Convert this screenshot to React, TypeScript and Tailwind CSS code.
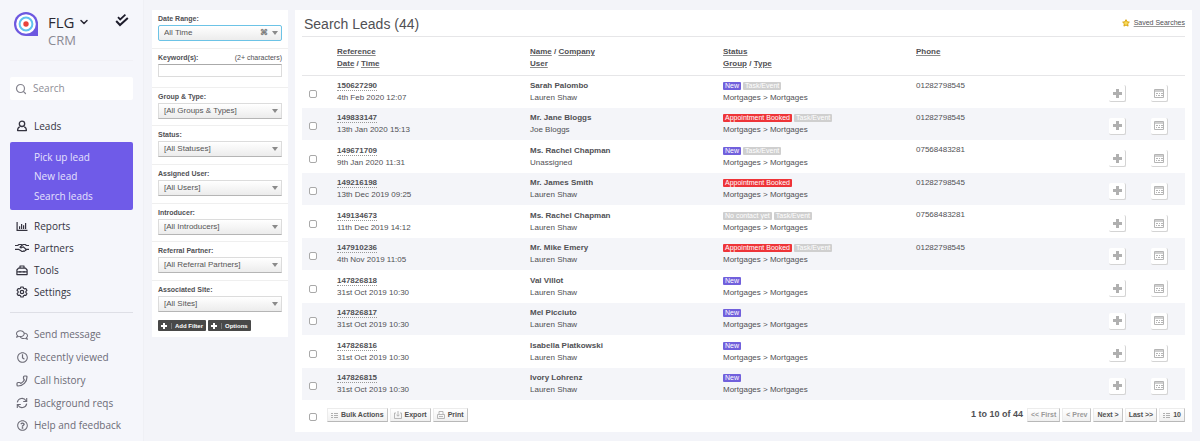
import type { ReactNode } from "react";
import { ChevronDown, Phone, Search } from "lucide-react";
import { FaRegClock, FaRegComments, FaRegQuestionCircle } from "react-icons/fa";

type Tag = "New" | "Task/Event" | "Appointment Booked" | "No contact yet";

interface Lead {
  reference: string;
  date: string;
  name: string;
  user: string;
  tags: Tag[];
  phone?: string;
}

const leads: Lead[] = [
  { reference: "150627290", date: "4th Feb 2020 12:07", name: "Sarah Palombo", user: "Lauren Shaw", tags: ["New", "Task/Event"], phone: "01282798545" },
  { reference: "149833147", date: "13th Jan 2020 15:13", name: "Mr. Jane Bloggs", user: "Joe Bloggs", tags: ["Appointment Booked", "Task/Event"], phone: "01282798545" },
  { reference: "149671709", date: "9th Jan 2020 11:31", name: "Ms. Rachel Chapman", user: "Unassigned", tags: ["New", "Task/Event"], phone: "07568483281" },
  { reference: "149216198", date: "13th Dec 2019 09:25", name: "Mr. James Smith", user: "Lauren Shaw", tags: ["Appointment Booked"], phone: "01282798545" },
  { reference: "149134673", date: "11th Dec 2019 14:12", name: "Ms. Rachel Chapman", user: "Lauren Shaw", tags: ["No contact yet", "Task/Event"], phone: "07568483281" },
  { reference: "147910236", date: "4th Nov 2019 11:05", name: "Mr. Mike Emery", user: "Lauren Shaw", tags: ["Appointment Booked", "Task/Event"], phone: "01282798545" },
  { reference: "147826818", date: "31st Oct 2019 10:30", name: "Val Villot", user: "Lauren Shaw", tags: ["New"] },
  { reference: "147826817", date: "31st Oct 2019 10:30", name: "Mel Picciuto", user: "Lauren Shaw", tags: ["New"] },
  { reference: "147826816", date: "31st Oct 2019 10:30", name: "Isabella Piatkowski", user: "Lauren Shaw", tags: ["New"] },
  { reference: "147826815", date: "31st Oct 2019 10:30", name: "Ivory Lohrenz", user: "Lauren Shaw", tags: ["New"] },
];

const tagColors: Record<Tag, string> = {
  New: "bg-[#7160dc]",
  "Task/Event": "bg-[#cfcfcf]",
  "Appointment Booked": "bg-[#ee3438]",
  "No contact yet": "bg-[#cfcfcf]",
};

const filters = [
  { id: "group", label: "Group & Type:", value: "[All Groups & Types]" },
  { id: "status", label: "Status:", value: "[All Statuses]" },
  { id: "assigned", label: "Assigned User:", value: "[All Users]" },
  { id: "introducer", label: "Introducer:", value: "[All Introducers]" },
  { id: "referral", label: "Referral Partner:", value: "[All Referral Partners]" },
  { id: "site", label: "Associated Site:", value: "[All Sites]" },
];

function Logo() {
  return (
    <svg viewBox="0 0 24 24" className="size-6 shrink-0">
      <path d="M12 0a12 12 0 1 0 0 24h12V12A12 12 0 0 0 12 0Z" fill="#6d58e0" />
      <circle cx="12" cy="12" r="9.8" fill="#fff" />
      <circle cx="12" cy="12" r="6.4" fill="none" stroke="#62c3ee" strokeWidth="2" />
      <circle cx="12" cy="12" r="2.7" fill="#e8443c" />
    </svg>
  );
}

function DoubleCheckIcon() {
  return (
    <svg viewBox="0 0 14 14" className="size-3.5" fill="none" stroke="#1d1c2b" strokeWidth="1.8">
      <path d="M3 4.200 5.200 6.400 10.400 1.700" />
      <path d="M1.200 8 5 12 12.800 5" strokeWidth="2" />
    </svg>
  );
}

function UserIcon() {
  return (
    <svg viewBox="0 0 12 12" className="size-3" fill="none" stroke="currentColor" strokeWidth="1.3">
      <circle cx="6" cy="3.8" r="2.7" />
      <path d="M3.8 6.9C2.2 7.300 1.600 8.500 1.600 10.600h8.800c0-2.100-.6-3.300-2.200-3.700" strokeLinejoin="round" />
    </svg>
  );
}

function ChartIcon() {
  return (
    <svg viewBox="0 0 12 12" className="size-3" fill="none" stroke="currentColor" strokeWidth="1.2">
      <path d="M1.100 2v8.400H11.500M3.600 6.200V9M5.600 4V9M7.600 5.300V9M9.600 3V9" />
    </svg>
  );
}

function HandshakeIcon() {
  return (
    <svg viewBox="0 0 14 12" className="h-3 w-3.5 shrink-0" fill="none" stroke="currentColor" strokeWidth="1.200" strokeLinejoin="round">
      <path d="M0 3.500h2.600L4 2.500h2.200l1 .7L8.300 2.500h1.900l1.300 1H14" />
      <path d="M7.200 3.200 5 5.200c.7 1 1.700.8 2.500 0l.9-.3 2.500 2.300c.6.800-.1 1.500-.8 1.200-.2.900-1.100 1.100-1.700.6-.6.700-1.500.6-2 .1L3.500 7.300H0M11.200 7.300H14" />
    </svg>
  );
}

function ToolboxIcon() {
  return (
    <svg viewBox="0 0 12 12" className="size-3" fill="none" stroke="currentColor" strokeWidth="1.2" strokeLinejoin="round">
      <path d="M.9 10.600V6l1.600-1.900h7L11.100 6v4.600Z" />
      <path d="M4 4V2h4v2M1 7.800h10M4 6.900v1.800M8 6.900v1.800" />
    </svg>
  );
}

function GearIcon() {
  return (
    <svg viewBox="0 0 12 12" className="size-3" fill="none" stroke="currentColor" strokeWidth="1.2" strokeLinejoin="round">
      <path d="M4.900 1h2.200l.4 1.300.9.500 1.400-.3 1.100 1.900-1 1v1.200l1 1-1.100 1.900-1.400-.3-.9.500-.4 1.300H4.900l-.4-1.300-.9-.5-1.400.3-1.100-1.900 1-1V5.400l-1-1 1.100-1.900 1.400.3.9-.5Z" />
      <circle cx="6" cy="6" r="1.700" />
    </svg>
  );
}

function SyncIcon() {
  return (
    <svg viewBox="0 0 12 12" className="size-3" fill="none" stroke="currentColor" strokeWidth="1.1">
      <path d="M1.300 5.300A4.700 4.700 0 0 1 10 3.700M10.700 1v3.500H7.200M10.700 6.700A4.700 4.700 0 0 1 2 8.300M1.300 11V7.500h3.500" />
    </svg>
  );
}

function PlusIcon({ className }: { className: string }) {
  return (
    <svg viewBox="0 0 9 9" className={className} fill="currentColor">
      <path d="M3 0h3v3h3v3H6v3H3V6H0V3h3Z" />
    </svg>
  );
}

function CalendarIcon() {
  return (
    <svg viewBox="0 0 10 9" className="h-[9px] w-2.5" fill="none" stroke="#b5b5b5">
      <path d="M.5.5h9v8h-9Z" />
      <path d="M1 2h8" stroke="#cfcfcf" strokeWidth="2" />
      <path d="M2 4.500h2M5 4.500h1M7 4.500h2M2 6.500h1M4 6.500h2M7 6.500h2" />
    </svg>
  );
}

function ListIcon() {
  return (
    <svg viewBox="0 0 7 7" className="size-[7px]" fill="none" stroke="#b0b0b0">
      <path d="M0 1.500h2M3 1.500h4M0 3.500h2M3 3.500h4M0 5.500h2M3 5.500h4" />
    </svg>
  );
}

function ExportIcon() {
  return (
    <svg viewBox="0 0 8 8" className="size-2" fill="none" stroke="#b0b0b0" strokeWidth=".9">
      <path d="M2 2H.5v5.500h7V2H6M4 0v5M2.500 3.700 4 5.300l1.500-1.600" />
    </svg>
  );
}

function PrintIcon() {
  return (
    <svg viewBox="0 0 8 8" className="size-2" fill="none" stroke="#b0b0b0" strokeWidth=".9">
      <path d="M2 3V.5h4V3M.5 7.500V3.500h7v4ZM2 5.500h4" />
    </svg>
  );
}

function StarIcon() {
  return (
    <svg viewBox="0 0 24 24" className="size-2" fill="#f8dc5a" stroke="#dba510" strokeWidth="3" strokeLinejoin="round">
      <path d="m12 2 3 6.500 7 .9-5.100 4.900 1.300 7L12 18l-6.200 3.300 1.300-7L2 9.400l7-.9Z" />
    </svg>
  );
}

function NavItem({ icon, children, className = "" }: { icon: ReactNode; children: ReactNode; className?: string }) {
  return (
    <a href="#" className={`flex items-center gap-1.5 pl-1.5 ${className}`}>
      <span className="flex w-3 justify-center">{icon}</span>
      {children}
    </a>
  );
}

function Sidebar() {
  return (
    <aside className="w-36 shrink-0 border-r border-[#eff0f5] bg-[#f5f6fb] px-2.5 font-['Open_Sans',sans-serif] text-[10px] text-[#34333f]">
      <div className="flex h-[61px] gap-2.5 border-b border-[#f1f1f6] pt-3 pl-1">
        <Logo />
        <div className="flex-1">
          <button className="flex items-center gap-1 text-[15px] leading-5 text-[#2a2934]">
            FLG <ChevronDown className="size-3" strokeWidth={3} />
          </button>
          <div className="text-[13px] leading-4 text-[#8b8a94]">CRM</div>
        </div>
        <button aria-label="Tasks" className="mr-1 h-4">
          <DoubleCheckIcon />
        </button>
      </div>

      <label className="mt-4 flex h-[23px] items-center gap-1.5 rounded-xs bg-white pr-1 pl-[5px]">
        <Search className="size-3 shrink-0 text-[#85848e]" strokeWidth={2.4} />
        <input aria-label="Search" placeholder="Search" className="w-full min-w-0 outline-none placeholder:text-[#8e8d96]" />
      </label>

      <nav>
        <NavItem icon={<UserIcon />} className="mt-[15px] h-[22px]">Leads</NavItem>
        <div className="mt-[5px] flex h-[68px] flex-col justify-center rounded-xs bg-[#6f5be8] pl-6 text-[#e6e2fd]">
          <a href="#" className="leading-5">Pick up lead</a>
          <a href="#" className="leading-[19px]">New lead</a>
          <a href="#" className="leading-5">Search leads</a>
        </div>
        <div className="mt-[5px] border-b border-[#dedfe6] pb-[9px]">
          <NavItem icon={<ChartIcon />} className="h-[22px]">Reports</NavItem>
          <NavItem icon={<HandshakeIcon />} className="h-[22px]">Partners</NavItem>
          <NavItem icon={<ToolboxIcon />} className="h-[22px]">Tools</NavItem>
          <NavItem icon={<GearIcon />} className="h-[22px]">Settings</NavItem>
        </div>
        <div className="mt-2.5 text-[#6c6b76]">
          <NavItem icon={<FaRegComments className="size-3" />} className="h-[23px]">Send message</NavItem>
          <NavItem icon={<FaRegClock className="size-[11px]" />} className="h-[23px]">Recently viewed</NavItem>
          <NavItem icon={<Phone className="size-3 -scale-x-100" strokeWidth={2.4} />} className="h-[23px]">Call history</NavItem>
          <NavItem icon={<SyncIcon />} className="h-[22px]">Background reqs</NavItem>
          <NavItem icon={<FaRegQuestionCircle className="size-[11px]" />} className="h-[23px]">Help and feedback</NavItem>
        </div>
      </nav>
    </aside>
  );
}

function SelectBox({ id, value, active = false }: { id: string; value: string; active?: boolean }) {
  return (
    <div className="relative">
      <select
        id={id}
        className={`block h-4 w-full appearance-none border bg-linear-to-b from-white to-[#ececec] pl-[5px] text-[8px] leading-3 text-[#555] outline-none ${
          active ? "rounded-xs border-[#6cc3e6]" : "border-[#dcdcdc] border-b-[#b5b5b5]"
        }`}
      >
        <option>{value}</option>
      </select>
      {active && <span className="absolute top-0.5 right-3.5 text-[8px] leading-3 font-bold text-[#777]">⌘</span>}
      <svg viewBox="0 0 6 4" className="pointer-events-none absolute top-1.5 right-1 h-1 w-1.5" fill="#8a8a8a">
        <path d="M0 0h6L3 4Z" />
      </svg>
    </div>
  );
}

function FilterGroup({ id, label, hint, children }: { id: string; label: string; hint?: string; children: ReactNode }) {
  return (
    <div className="h-[39px] border-b border-[#efefef] px-1.5 pt-1 last:border-0 nth-[3n]:h-[38px]">
      <div className="flex h-[11px] justify-between text-[7px] leading-[10px]">
        <label htmlFor={id} className="font-bold">{label}</label>
        {hint && <span>{hint}</span>}
      </div>
      {children}
    </div>
  );
}

function DarkButton({ children }: { children: ReactNode }) {
  return (
    <button className="flex h-[11px] items-center rounded-[1px] bg-[#484848] px-[3px] text-[6px] font-bold text-white">
      <PlusIcon className="mr-1 size-1.5" />
      <span className="border-l border-[#777] pl-[3px] leading-[6px]">{children}</span>
    </button>
  );
}

function Filters() {
  return (
    <form className="w-[136px] shrink-0 self-start bg-white pb-1.5">
      <div>
        <FilterGroup id="range" label="Date Range:">
          <SelectBox id="range" value="All Time" active />
        </FilterGroup>
        <FilterGroup id="keywords" label="Keyword(s):" hint="(2+ characters)">
          <input id="keywords" className="block h-[13px] w-full border border-[#dcdcdc] border-t-[#aaa] text-[8px] outline-none" />
        </FilterGroup>
        {filters.map((f) => (
          <FilterGroup key={f.id} id={f.id} label={f.label}>
            <SelectBox id={f.id} value={f.value} />
          </FilterGroup>
        ))}
      </div>
      <div className="flex gap-0.5 px-1.5">
        <DarkButton>Add Filter</DarkButton>
        <DarkButton>Options</DarkButton>
      </div>
    </form>
  );
}

function SortLink({ children }: { children: ReactNode }) {
  return <a href="#" className="underline decoration-[#8c8c8c] decoration-1 underline-offset-1">{children}</a>;
}

function LightButton({ children, disabled = false }: { children: ReactNode; disabled?: boolean }) {
  return (
    <button
      disabled={disabled}
      className="flex h-3.5 items-center gap-[3px] border border-[#ececec] border-r-[#c4c4c4] border-b-[#b8b8b8] bg-linear-to-b from-white to-[#f0f0f0] px-[3px] text-[7px] font-bold whitespace-nowrap text-[#505050] disabled:text-[#9a9a9a]"
    >
      {children}
    </button>
  );
}

function IconButton({ label, children }: { label: string; children: ReactNode }) {
  return (
    <button
      aria-label={label}
      className="flex size-[17px] items-center justify-center rounded-xs border-r border-b border-[#d4d4d4] bg-white text-[#b0b0b0]"
    >
      {children}
    </button>
  );
}

function CheckBox({ label }: { label: string }) {
  return (
    <input
      type="checkbox"
      aria-label={label}
      className="block size-2 appearance-none rounded-xs border border-[#a9a9a9] bg-white checked:bg-[#6f5be8]"
    />
  );
}

function LeadRow({ lead }: { lead: Lead }) {
  return (
    <tr className="h-[33px] even:h-8 even:bg-[#f4f5f9]">
      <td className="pt-1 pl-[7px]">
        <CheckBox label={`Select lead ${lead.reference}`} />
      </td>
      <td>
        <a href="#" className="border-b border-dotted border-[#999] font-bold">{lead.reference}</a>
        <div>{lead.date}</div>
      </td>
      <td>
        <div className="font-bold">{lead.name}</div>
        <div>{lead.user}</div>
      </td>
      <td>
        <div className="flex h-3 items-center gap-0.5">
          {lead.tags.map((tag) => (
            <span key={tag} className={`h-2 rounded-[1px] px-0.5 text-[7px] leading-2 text-white ${tagColors[tag]}`}>
              {tag}
            </span>
          ))}
        </div>
        <div>Mortgages &gt; Mortgages</div>
      </td>
      <td className="pt-1 align-top">{lead.phone}</td>
      <td className="pt-1">
        <IconButton label="Add">
          <PlusIcon className="size-[9px]" />
        </IconButton>
      </td>
      <td className="pt-1">
        <IconButton label="Calendar">
          <CalendarIcon />
        </IconButton>
      </td>
    </tr>
  );
}

function LeadsPanel() {
  return (
    <main className="min-w-0 flex-1 self-start bg-white px-[7px]">
      <header className="flex h-[27px] items-center justify-between border-b border-[#e6e6e8]">
        <h1 className="pt-0.5 pl-0.5 text-[14px] leading-5">Search Leads (44)</h1>
        <a href="#" className="flex items-center gap-1 text-[7px]">
          <StarIcon />
          <span className="underline decoration-[#999] decoration-1 underline-offset-1">Saved Searches</span>
        </a>
      </header>

      <table className="w-full table-fixed border-collapse text-left text-[8px] leading-3">
        <colgroup>
          <col className="w-[35px]" />
          <col />
          <col />
          <col />
          <col />
          <col className="w-[42px]" />
          <col className="w-[34px]" />
        </colgroup>
        <thead>
          <tr className="h-[38px] border-b border-[#e6e6e8] align-top *:pt-[9px]">
            <th />
            <th>
              <SortLink>Reference</SortLink>
              <div><SortLink>Date</SortLink> / <SortLink>Time</SortLink></div>
            </th>
            <th>
              <SortLink>Name</SortLink> / <SortLink>Company</SortLink>
              <div><SortLink>User</SortLink></div>
            </th>
            <th>
              <SortLink>Status</SortLink>
              <div><SortLink>Group</SortLink> / <SortLink>Type</SortLink></div>
            </th>
            <th><SortLink>Phone</SortLink></th>
            <th />
            <th />
          </tr>
        </thead>
        <tbody>
          {leads.map((lead) => (
            <LeadRow key={lead.reference} lead={lead} />
          ))}
        </tbody>
      </table>

      <footer className="flex h-8 items-center gap-0.5 pb-0.5 pl-[7px]">
        <div className="mr-2 pt-1">
          <CheckBox label="Select all leads" />
        </div>
        <LightButton><ListIcon />Bulk Actions</LightButton>
        <LightButton><ExportIcon />Export</LightButton>
        <LightButton><PrintIcon />Print</LightButton>
        <span className="mr-0.5 ml-auto text-[9px] font-bold">1 to 10 of 44</span>
        <LightButton disabled>&lt;&lt; First</LightButton>
        <LightButton disabled>&lt; Prev</LightButton>
        <LightButton>Next &gt;</LightButton>
        <LightButton>Last &gt;&gt;</LightButton>
        <LightButton><ListIcon />10</LightButton>
      </footer>
    </main>
  );
}

export default function App() {
  return (
    <div className="flex min-h-screen bg-[#f3f4f9] font-['Liberation_Sans',Arial,sans-serif] text-[#505054]">
      <Sidebar />
      <div className="flex min-w-0 flex-1 gap-[7px] py-2.5 pr-2 pl-2">
        <Filters />
        <LeadsPanel />
      </div>
    </div>
  );
}
